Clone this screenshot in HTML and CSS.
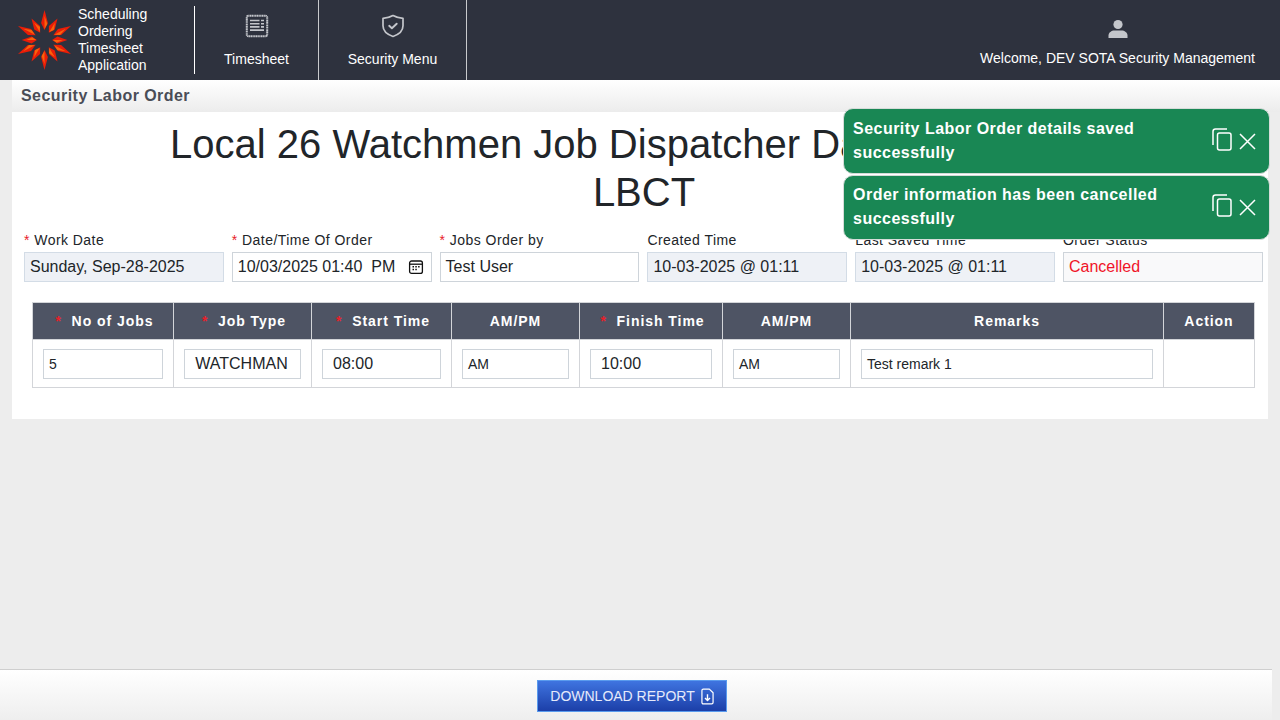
FILE: index.html
```html
<!DOCTYPE html>
<html lang="en">
<head>
  <meta charset="UTF-8">
  <title>Security Labor Order</title>
  <meta name="viewport" content="width=device-width, initial-scale=1.0">
  <link rel="stylesheet" href="styles.css">
</head>
<body>
  <header class="topbar">
    <div class="brand">
      <svg class="brand-logo" viewBox="-26.500 -30 54 60" width="54" height="60">
        <defs>
          <g id="spike">
            <path d="M0 -30L-3.400 -17L0 -10L3.400 -17Z" fill="#ea1d08"/>
            <path d="M0 -24L2.800 -16L0 -11Z" fill="#f8640c"/>
          </g>
        </defs>
        <use href="#spike"/>
        <use href="#spike" transform="rotate(180)"/>
        <use href="#spike" transform="rotate(31) scale(1 .84)"/>
        <use href="#spike" transform="rotate(-31) scale(1 .84)"/>
        <use href="#spike" transform="rotate(149) scale(1 .84)"/>
        <use href="#spike" transform="rotate(-149) scale(1 .84)"/>
        <use href="#spike" transform="rotate(62)"/>
        <use href="#spike" transform="rotate(-62)"/>
        <use href="#spike" transform="rotate(118)"/>
        <use href="#spike" transform="rotate(-118)"/>
        <use href="#spike" transform="rotate(90) scale(1 .76)"/>
        <use href="#spike" transform="rotate(-90) scale(1 .76)"/>
      </svg>
      <div class="brand-text">Scheduling<br>Ordering<br>Timesheet<br>Application</div>
    </div>
    <nav class="nav">
      <a class="nav-item nav-timesheet">
        <svg viewBox="0 0 24 24" width="24" height="24" fill="none" stroke="#c4c6cb">
          <rect x="1.800" y="1.800" width="20.400" height="20.400" rx="1.500" stroke-width="2" stroke-dasharray="1.300 .4"/>
          <path d="M5 6.500h9.500M5 9.700h9.500M5 12.900h9.500M5 16.100h14M16 6.500h3M16 9.700h3M16 12.900h3" stroke-width="1.600"/>
        </svg>
        <span>Timesheet</span>
      </a>
      <a class="nav-item nav-security">
        <svg viewBox="0 0 24 24" width="24" height="24" fill="none" stroke="#c4c6cb" stroke-width="1.700" stroke-linecap="round" stroke-linejoin="round">
          <path d="M12 1.500c3 1.800 6 2.600 10 2.800v7.500c0 5-4 8.600-10 10.700C6 20.400 2 16.800 2 11.800V4.300c4-.2 7-1 10-2.800z"/>
          <path d="M8.200 11.800l2.700 2.500 4.800-4.600" stroke-width="1.900"/>
        </svg>
        <span>Security Menu</span>
      </a>
    </nav>
    <div class="welcome">
      <svg viewBox="0 0 20 20" width="20" height="20" fill="#c4c6cb">
        <circle cx="10" cy="5.500" r="4.600"/>
        <path d="M.5 19v-2.500c0-3 3-5 6-5h7c3 0 6 2 6 5V19z"/>
      </svg>
      <span>Welcome, DEV SOTA Security Management</span>
    </div>
  </header>

  <div class="page-title">Security Labor Order</div>

  <main class="card">
    <h1>Local 26 Watchmen Job Dispatcher Daily Order Form<br>LBCT</h1>

    <div class="fields">
      <div class="field">
        <label><span class="req">*</span> Work Date</label>
        <div class="box readonly">Sunday, Sep-28-2025</div>
      </div>
      <div class="field">
        <label><span class="req">*</span> Date/Time Of Order</label>
        <div class="box datebox">
          <span>10/03/2025 01:40&nbsp; PM</span>
          <svg viewBox="0 0 16 16" width="16" height="16" fill="none" stroke="#111" stroke-width="1.300">
            <rect x="1.600" y="2" width="12.800" height="12.400" rx="2"/>
            <path d="M1.600 5.200h12.800"/>
            <path d="M4.500 7.800h1.500M7.300 7.800h1.500M10.100 7.800h1.500M4.500 10.600h1.500M7.300 10.600h1.500" stroke-width="1.500"/>
          </svg>
        </div>
      </div>
      <div class="field">
        <label><span class="req">*</span> Jobs Order by</label>
        <div class="box">Test User</div>
      </div>
      <div class="field">
        <label>Created Time</label>
        <div class="box readonly">10-03-2025 @ 01:11</div>
      </div>
      <div class="field">
        <label>Last Saved Time</label>
        <div class="box readonly">10-03-2025 @ 01:11</div>
      </div>
      <div class="field">
        <label>Order Status</label>
        <div class="box status">Cancelled</div>
      </div>
    </div>

    <table class="jobs">
      <colgroup>
        <col class="c-jobs"><col class="c-type"><col class="c-start"><col class="c-ampm1">
        <col class="c-finish"><col class="c-ampm2"><col class="c-remarks"><col class="c-action">
      </colgroup>
      <thead>
        <tr>
          <th class="th-req"><span class="req">*</span>&nbsp; No of Jobs</th>
          <th class="th-req"><span class="req">*</span>&nbsp; Job Type</th>
          <th class="th-req"><span class="req">*</span>&nbsp; Start Time</th>
          <th>AM/PM</th>
          <th class="th-req"><span class="req">*</span>&nbsp; Finish Time</th>
          <th>AM/PM</th>
          <th>Remarks</th>
          <th>Action</th>
        </tr>
      </thead>
      <tbody>
        <tr>
          <td><div class="cell small">5</div></td>
          <td><div class="cell center">WATCHMAN</div></td>
          <td><div class="cell pad">08:00</div></td>
          <td><div class="cell small">AM</div></td>
          <td><div class="cell pad">10:00</div></td>
          <td><div class="cell small">AM</div></td>
          <td><div class="cell small">Test remark 1</div></td>
          <td></td>
        </tr>
      </tbody>
    </table>
  </main>

  <footer class="footer">
    <button class="download">DOWNLOAD REPORT
      <svg viewBox="0 0 14 18" width="13" height="17" fill="none" stroke="#fff" stroke-width="1.300" stroke-linejoin="round">
        <path d="M2.500 1h6.500l4 4v10.500a1.500 1.500 0 0 1-1.500 1.500H2.500A1.500 1.500 0 0 1 1 15.500v-13A1.500 1.500 0 0 1 2.500 1z"/>
        <path d="M7 6.500v6.500M4.300 10.500L7 13.200l2.700-2.700" stroke-width="1.500"/>
      </svg>
    </button>
  </footer>

  <div class="toasts">
    <div class="toast">
      <div class="toast-msg">Security Labor Order details saved successfully</div>
      <svg class="toast-icons" viewBox="0 0 46 26" width="46" height="26" fill="none" stroke="#fff" stroke-width="1.500">
        <rect x="6.500" y="6" width="13.500" height="17" rx="2"/>
        <path d="M2 18V4.500A2.500 2.500 0 0 1 4.500 2H16"/>
        <path d="M29 7l15 15M44 7L29 22"/>
      </svg>
    </div>
    <div class="toast toast-second">
      <div class="toast-msg">Order information has been cancelled successfully</div>
      <svg class="toast-icons" viewBox="0 0 46 26" width="46" height="26" fill="none" stroke="#fff" stroke-width="1.500">
        <rect x="6.500" y="6" width="13.500" height="17" rx="2"/>
        <path d="M2 18V4.500A2.500 2.500 0 0 1 4.500 2H16"/>
        <path d="M29 7l15 15M44 7L29 22"/>
      </svg>
    </div>
  </div>
</body>
</html>
```

FILE: styles.css
```css
* {
  box-sizing: border-box;
}

html, body {
  height: 100%;
}

body {
  margin: 0;
  display: flex;
  flex-direction: column;
  height: 720px;
  overflow: hidden;
  background: #ededed;
  font-family: "Liberation Sans", Arial, sans-serif;
  color: #212529;
}

/* top bar */
.topbar {
  display: flex;
  height: 80px;
  background: #2e323e;
  color: #fff;
  font-size: 14px;
}

.brand {
  display: flex;
  align-items: center;
  width: 195px;
  padding-left: 18px;
  position: relative;
}

.brand::after {
  content: "";
  position: absolute;
  right: 0;
  top: 6px;
  bottom: 6px;
  width: 1px;
  background: #fff;
}

.brand-logo {
  flex: none;
}

.brand-text {
  margin-left: 6px;
  line-height: 17px;
}

.nav {
  display: flex;
}

.nav-item {
  display: flex;
  flex-direction: column;
  align-items: center;
  padding-top: 14px;
  border-right: 1px solid #c9cacd;
}

.nav-item span {
  margin-top: 13px;
  line-height: 17px;
}

.nav-timesheet {
  width: 124px;
}

.nav-security {
  width: 148px;
}

.welcome {
  margin-left: auto;
  width: 300px;
  padding: 19px 25px 0 0;
  display: flex;
  flex-direction: column;
  align-items: center;
}

.welcome span {
  margin-top: 11px;
  line-height: 17px;
  white-space: nowrap;
}

/* page title strip */
.page-title {
  height: 32px;
  margin-left: 12px;
  padding: 7px 9px 0;
  background: linear-gradient(#fff, #ececec);
  color: #4a4d57;
  font-size: 16px;
  font-weight: bold;
  letter-spacing: 0.45px;
}

/* main card */
.card {
  margin: 0 12px;
  height: 307px;
  background: #fff;
  padding: 8px 12px 0;
}

h1 {
  margin: 0 0 14px;
  padding: 0 20px 0 28px;
  text-align: center;
  font-size: 40px;
  font-weight: 400;
  line-height: 48px;
}

.fields {
  display: grid;
  grid-template-columns: repeat(6, 199.800px);
  column-gap: 8px;
}

.field label {
  display: block;
  height: 22px;
  font-size: 14px;
  line-height: 17px;
  letter-spacing: 0.45px;
  padding-top: 2px;
}

.req {
  color: #e8202a;
}

.box {
  height: 30px;
  padding: 0 5px;
  border: 1px solid #ced4da;
  font-size: 16px;
  line-height: 28px;
  white-space: nowrap;
}

.readonly {
  background: #eef1f6;
  border-color: #d3dce6;
}

.datebox {
  display: flex;
  align-items: center;
  justify-content: space-between;
  padding-right: 7px;
}

.status {
  background: #f9f9fa;
  color: #f01428;
}

/* jobs table */
.jobs {
  width: 1222px;
  margin: 20px 0 0 8px;
  border-collapse: collapse;
  table-layout: fixed;
}

.c-jobs { width: 141px; }
.c-type { width: 138px; }
.c-start { width: 140px; }
.c-ampm1 { width: 128px; }
.c-finish { width: 143px; }
.c-ampm2 { width: 128px; }
.c-remarks { width: 313px; }
.c-action { width: 91px; }

.jobs th {
  height: 37px;
  padding: 0;
  background: #4e5464;
  border: 1px solid #d3d5d9;
  color: #fff;
  font-size: 14px;
  font-weight: bold;
  letter-spacing: 0.95px;
  text-align: center;
}

.jobs th.th-req {
  padding-left: 3px;
}

.jobs td {
  height: 48px;
  padding: 0 10px;
  border: 1px solid #d3d5d9;
}

.cell {
  height: 30px;
  border: 1px solid #ced4da;
  padding: 0 5px;
  font-size: 16px;
  line-height: 28px;
}

.cell.small {
  font-size: 14px;
}

.cell.center {
  text-align: center;
  padding-right: 7px;
}

.cell.pad {
  padding-left: 10px;
}

/* footer */
.footer {
  margin-top: auto;
  width: 1272px;
  height: 51px;
  border-top: 1px solid #cfcfcf;
  background: linear-gradient(#fff, #eee);
  display: flex;
  justify-content: center;
  padding: 10px 8px 0 0;
}

.download {
  display: flex;
  align-items: center;
  justify-content: center;
  gap: 6px;
  width: 190px;
  height: 32px;
  padding: 0;
  border: 1px solid #5a9bee;
  background: linear-gradient(#3f74e0, #1c3fa8);
  color: #e6eafb;
  font-family: inherit;
  font-size: 14px;
}

/* toasts lie over the card */
.toasts {
  position: absolute;
  left: 843px;
  top: 108px;
  width: 427px;
  display: flex;
  flex-direction: column;
  gap: 1px;
}

.toast {
  display: flex;
  align-items: center;
  justify-content: space-between;
  height: 66px;
  padding: 0 12px 0 9px;
  background: #198754;
  border: 1px solid #d6dcd9;
  border-radius: 10px;
  color: #fff;
  font-size: 16px;
  font-weight: bold;
  line-height: 24px;
  letter-spacing: 0.48px;
}

.toast-second {
  height: 65px;
  padding-bottom: 1px;
}

.toast-msg {
  width: 340px;
}

.toast-icons {
  flex: none;
  margin-top: -2px;
}
```
